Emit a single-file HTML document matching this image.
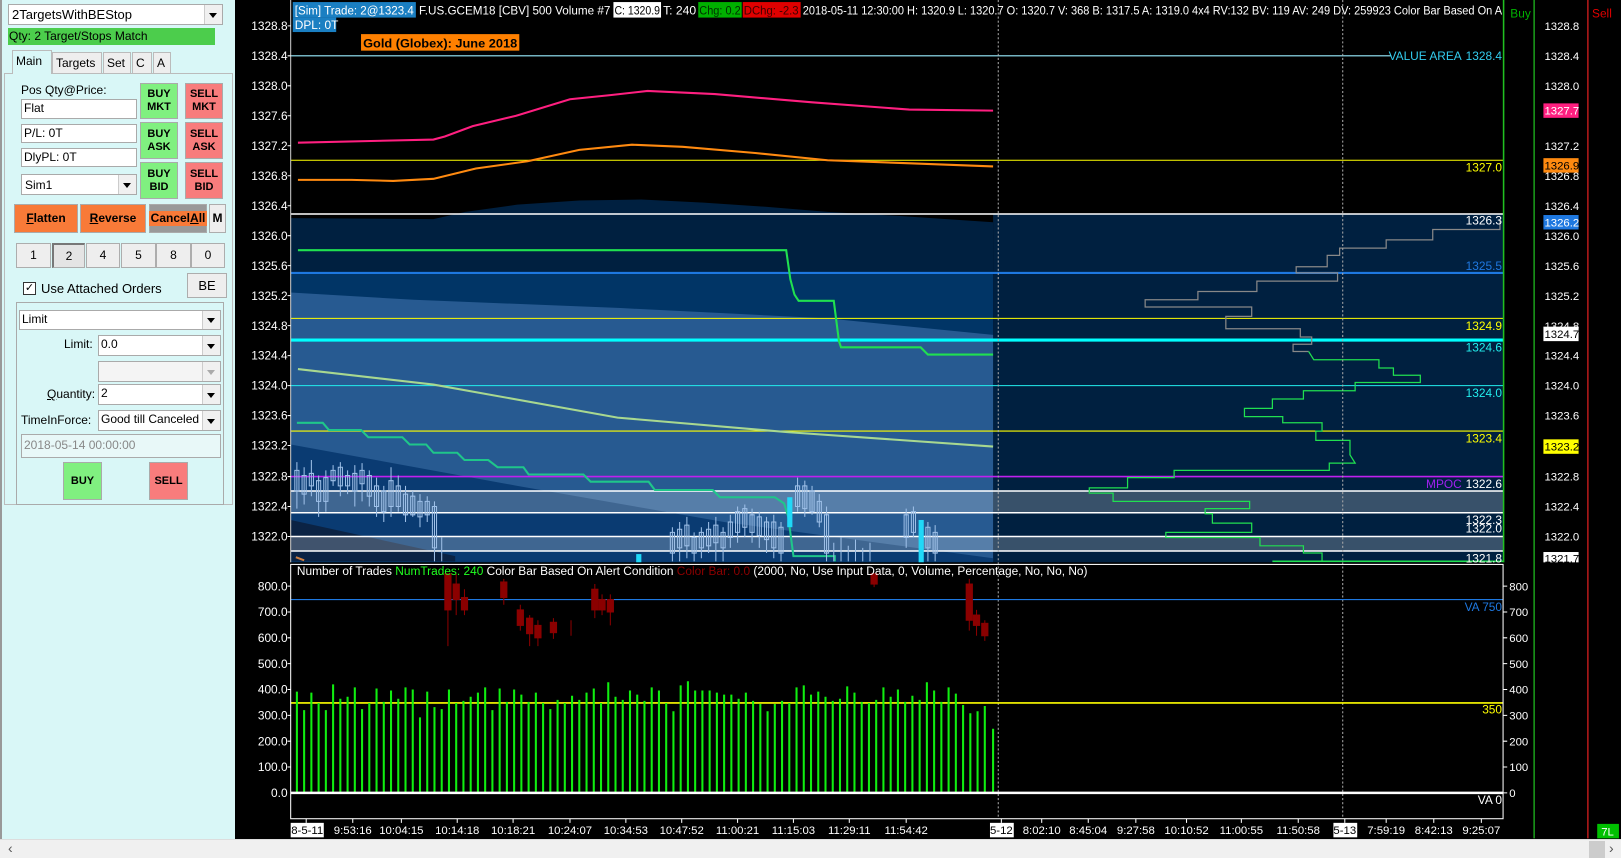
<!DOCTYPE html>
<html><head><meta charset="utf-8"><style>
*{margin:0;padding:0;box-sizing:border-box}
body{width:1621px;height:858px;overflow:hidden;background:#000;font-family:"Liberation Sans",sans-serif;position:relative}
#chart{position:absolute;left:0;top:0}
#lp{position:absolute;left:0;top:0;width:235px;height:839px;background:#d9f7f7;border-left:2px solid #999}
.a{position:absolute;font-size:12px;color:#000;white-space:nowrap}
.fld{position:absolute;background:#fff;border:1px solid #aaa;font-size:12px;padding:1px 2px;white-space:nowrap;overflow:hidden}
.dd::after{content:"";position:absolute;right:0;top:0;width:17px;height:100%;background:#f0f0f0;border-left:1px solid #ccc}
.arr{position:absolute;right:5px;top:50%;margin-top:-2px;width:0;height:0;border-left:4px solid transparent;border-right:4px solid transparent;border-top:5px solid #000;z-index:2}
.btn{position:absolute;display:flex;align-items:center;justify-content:center;text-align:center;font-size:11px;font-weight:bold;line-height:13px;border:1px solid #aaa}
.g{background:#80f080}.r{background:#f87c7c}
.o{background:#f87a38;font-size:12px}
.n{background:#eee;font-weight:normal;font-size:12px;border:1px solid #adadad}
.tab{position:absolute;top:52px;height:22px;background:#eee;border:1px solid #bbb;font-size:12px;padding:3px 3px}
#sb{position:absolute;left:0;top:839px;width:1621px;height:19px;background:#f0f0f0;border-top:1px solid #ddd}
</style></head><body>
<svg id="chart" width="1621" height="858" viewBox="0 0 1567 830" preserveAspectRatio="none" font-family="Liberation Sans, sans-serif">
<defs><clipPath id="pp"><rect x="281" y="0" width="1172" height="544"/></clipPath></defs>
<rect x="0" y="0" width="1567" height="830" fill="#000"/>
<g clip-path="url(#pp)">
<polygon fill="#002040" points="281,211 419,212 450,205 500,198 560,194 620,193 680,196 740,200 800,205 870,209 960,215 960,543 281,543"/>
<rect x="960" y="207" width="493" height="337" fill="#002040"/>
<rect x="281" y="265" width="679" height="279" fill="#013566"/>
<polygon fill="#275a91" points="281,283 400,290 600,298 800,308 960,324 960,543 281,543"/>
<polygon fill="#0a3b72" points="281,430 500,470 700,505 960,540 960,543 281,543"/>
<polygon fill="#0b2344" points="281,503 440,538 440,543 281,543"/>
<rect x="281" y="475" width="1172" height="21" fill="#fff" fill-opacity="0.22"/>
<rect x="281" y="519" width="1172" height="14" fill="#fff" fill-opacity="0.22"/>
<g stroke="#fff" stroke-width="1.5"><line x1="281" y1="207" x2="1453" y2="207"/><line x1="281" y1="475" x2="1453" y2="475"/><line x1="281" y1="496" x2="1453" y2="496"/><line x1="281" y1="519" x2="1453" y2="519"/><line x1="281" y1="533" x2="1453" y2="533"/></g>
<line x1="281" y1="54" x2="1345" y2="54" stroke="#9ef" stroke-width="1"/>
<line x1="281" y1="155" x2="1453" y2="155" stroke="#ff0" stroke-width="1"/>
<line x1="281" y1="264" x2="1453" y2="264" stroke="#1e78e0" stroke-width="2"/>
<line x1="281" y1="308" x2="1453" y2="308" stroke="#ff0" stroke-width="1"/>
<line x1="281" y1="329" x2="1453" y2="329" stroke="#0ff" stroke-width="3"/>
<line x1="281" y1="373" x2="1453" y2="373" stroke="#2ee" stroke-width="1"/>
<line x1="281" y1="417" x2="1453" y2="417" stroke="#ff0" stroke-width="1"/>
<line x1="281" y1="461" x2="1453" y2="461" stroke="#c020f0" stroke-width="1.5"/>
<polyline fill="none" stroke="#ff1f80" stroke-width="2" points="288,138 419,135 430,132 457,122 499,112 551,96 590,92 626,88 691,91 785,99 879,106 960,107"/>
<polyline fill="none" stroke="#ff8a10" stroke-width="2" points="288,174 340,174 380,175 419,173 460,163 510,156 560,145 611,140 660,142 730,148 800,155 880,158 960,161"/>
<polyline fill="none" stroke="#20e050" stroke-width="2" points="288,242 760,242 764,270 768,285 772,291 806,291 811,330 813,336 890,336 897,343 960,343"/>
<polyline fill="none" stroke="#a8d890" stroke-width="2" points="288,357 419,372 597,404 761,418 960,432"/>
<polyline fill="none" stroke="#1fc68a" stroke-width="2" points="287,409 312,409 318,416 349,416 356,423 389,423 396,430 412,430 419,438 442,438 449,445 472,445 481,452 506,452 511,459 564,459 571,466 627,466 633,474 689,474 696,481 749,481 758,487 762,500 767,538 807,538 807,543"/>
<g stroke="#9ec0e8" fill="none" stroke-width="1">
<path d="M287,447V492M294,452V488M301,445V480M308,460V500M315,455V495M322,450V470M329,447V480M336,455V478M343,450V490M350,448V485M357,455V490M364,462V500M371,470V505M378,452V500M385,460V495M392,470V505M399,475V500M406,478V510M413,480V505M420,485V543M427,520V543M650,510V543M657,505V543M664,500V540M671,515V543M678,510V540M685,505V535M692,500V543M699,510V543M706,498V530M713,490V525M720,488V520M727,492V525M734,495V530M741,500V535M748,498V540M755,505V543M771,462V495M778,465V500M785,470V498M792,478V510M799,490V543M806,525V543M813,520V543M820,528V543M827,522V543M834,530V543M841,525V543M876,492V530M883,490V520M897,505V543M904,508V543"/>
<path d="M285,455h4v20h-4zM292,460h4v18h-4zM299,458h4v12h-4zM306,465h4v20h-4zM313,462h4v23h-4zM320,455h4v10h-4zM327,452h4v18h-4zM334,460h4v10h-4zM341,458h4v17h-4zM348,455h4v13h-4zM355,460h4v20h-4zM362,470h4v20h-4zM369,475h4v20h-4zM376,465h4v25h-4zM383,470h4v20h-4zM390,478h4v20h-4zM397,480h4v18h-4zM404,485h4v15h-4zM411,485h4v13h-4zM418,490h4v40h-4zM648,515h4v20h-4zM655,512h4v18h-4zM662,508h4v20h-4zM669,520h4v15h-4zM676,515h4v15h-4zM683,512h4v16h-4zM690,508h4v17h-4zM697,515h4v15h-4zM704,505h4v15h-4zM711,495h4v20h-4zM718,492h4v18h-4zM725,498h4v17h-4zM732,500h4v18h-4zM739,505h4v17h-4zM746,505h4v25h-4zM753,510h4v25h-4zM769,470h4v20h-4zM776,470h4v22h-4zM783,475h4v20h-4zM790,485h4v20h-4zM797,498h4v37h-4zM874,498h4v22h-4zM881,495h4v20h-4zM895,510h4v20h-4zM902,515h4v20h-4z"/>
</g>
<g fill="#20d8f8"><rect x="761" y="481" width="5" height="29"/><rect x="888" y="503" width="5" height="41"/><rect x="615" y="536" width="5" height="8"/></g>
<polyline fill="none" stroke="#888" stroke-width="1.2" points="1450,213 1450,222 1385,222 1385,232 1340,232 1340,240 1295,240 1295,247 1283,247 1283,258 1253,258 1253,264 1293,264 1293,272 1215,272 1215,282 1158,282 1158,290 1107,290 1107,297 1210,297 1210,306 1185,306 1185,318 1257,318 1257,326 1268,326 1268,333 1250,333 1250,340 1265,340"/>
<polyline fill="none" stroke="#20e050" stroke-width="1.2" points="1265,340 1270,348 1333,348 1333,356 1347,356 1347,363 1373,363 1373,370 1310,370 1310,378 1260,378 1260,386 1230,386 1230,395 1203,395 1203,403 1240,403 1240,409 1278,409 1278,417 1272,417 1272,426 1305,426 1305,440 1310,448 1285,448 1285,455 1135,455 1135,462 1090,462 1090,472 1053,472 1053,477 1076,477 1076,485 1208,485 1208,492 1165,492 1165,497 1172,497 1172,506 1210,506 1210,515 1127,515 1127,520 1218,520 1218,528 1260,528 1260,535 1278,535 1278,543"/>
<line x1="1230" y1="543" x2="1453" y2="543" stroke="#20e050" stroke-width="1.5"/>
<path d="M286,539l8,3" stroke="#d08040" stroke-width="2"/>
</g>
<g stroke="#aaa" stroke-dasharray="2,2" stroke-width="1"><line x1="965" y1="0" x2="965" y2="792"/><line x1="1298" y1="0" x2="1298" y2="792"/></g>
<line x1="281" y1="0" x2="281" y2="544" stroke="#ccc" stroke-width="1"/>
<line x1="1453.5" y1="0" x2="1453.5" y2="544" stroke="#20c020" stroke-width="1.5"/>
<line x1="1483" y1="0" x2="1483" y2="811" stroke="#20c020" stroke-width="1.2"/>
<line x1="1535" y1="0" x2="1535" y2="811" stroke="#e02020" stroke-width="1.2"/>
<g font-size="11.5" fill="#fff" lengthAdjust="spacingAndGlyphs">
<rect x="283" y="2" width="119" height="15" fill="#1a7fc2"/>
<text x="285" y="14" textLength="115" lengthAdjust="spacingAndGlyphs">[Sim]  Trade: 2@1323.4</text>
<text x="405" y="14" textLength="185" lengthAdjust="spacingAndGlyphs">F.US.GCEM18 [CBV]  500 Volume  #7</text>
<rect x="593" y="2" width="46" height="15" fill="#fff"/><text x="594" y="14" fill="#000" textLength="44" lengthAdjust="spacingAndGlyphs">C: 1320.9</text>
<text x="641" y="14" textLength="32" lengthAdjust="spacingAndGlyphs">T: 240</text>
<rect x="675" y="2" width="42" height="15" fill="#00b000"/><text x="676" y="14" fill="#003000" textLength="40" lengthAdjust="spacingAndGlyphs">Chg: 0.2</text>
<rect x="718" y="2" width="56" height="15" fill="#e00000"/><text x="719" y="14" fill="#400000" textLength="53" lengthAdjust="spacingAndGlyphs">DChg: -2.3</text>
<text x="776" y="14" textLength="676" lengthAdjust="spacingAndGlyphs">2018-05-11 12:30:00 H: 1320.9 L: 1320.7 O: 1320.7 V: 368 B: 1317.5 A: 1319.0 4x4 RV:132 BV: 119 AV: 249 DV: 259923 Color Bar Based On A</text>
<rect x="283" y="17" width="42" height="14" fill="#1a7fc2"/><text x="285" y="28">DPL: 0T</text>
<rect x="349" y="33" width="153" height="16" fill="#ff8000"/><text x="351" y="46" fill="#000" font-weight="bold" font-size="12" textLength="149" lengthAdjust="spacingAndGlyphs">Gold (Globex): June 2018</text>
<text x="1460" y="17" fill="#00b000">Buy</text><text x="1539" y="17" fill="#e00000">Sell</text>
</g>
<g font-size="11.5" fill="#fff" text-anchor="end">
<text x="278" y="29">1328.8</text><text x="278" y="58">1328.4</text><text x="278" y="87">1328.0</text><text x="278" y="116">1327.6</text><text x="278" y="145">1327.2</text><text x="278" y="174">1326.8</text><text x="278" y="203">1326.4</text><text x="278" y="232">1326.0</text><text x="278" y="261">1325.6</text><text x="278" y="290">1325.2</text><text x="278" y="319">1324.8</text><text x="278" y="348">1324.4</text><text x="278" y="377">1324.0</text><text x="278" y="406">1323.6</text><text x="278" y="435">1323.2</text><text x="278" y="465">1322.8</text><text x="278" y="494">1322.4</text><text x="278" y="523">1322.0</text>
<text x="278" y="571">800.0</text><text x="278" y="596">700.0</text><text x="278" y="621">600.0</text><text x="278" y="646">500.0</text><text x="278" y="671">400.0</text><text x="278" y="696">300.0</text><text x="278" y="721">200.0</text><text x="278" y="746">100.0</text><text x="278" y="771">0.0</text>
<text x="1413" y="58" fill="#3ce">VALUE AREA</text><text x="1452" y="58" fill="#3ce">1328.4</text>
<text x="1452" y="166" fill="#ff0">1327.0</text>
<text x="1452" y="217">1326.3</text>
<text x="1452" y="261" fill="#1e78e0">1325.5</text>
<text x="1452" y="319" fill="#ff0">1324.9</text>
<text x="1452" y="340" fill="#2ee">1324.6</text>
<text x="1452" y="384" fill="#2ee">1324.0</text>
<text x="1452" y="428" fill="#ff0">1323.4</text>
<text x="1413" y="472" fill="#a020f0">MPOC</text><text x="1452" y="472">1322.6</text>
<text x="1452" y="507">1322.3</text><text x="1452" y="515">1322.0</text><text x="1452" y="544">1321.8</text>
<text x="1452" y="591" fill="#1e78e0">VA  750</text>
<text x="1452" y="690" fill="#ff0">350</text>
<text x="1452" y="778">VA  0</text>
</g>
<g stroke="#fff" stroke-width="1"><path d="M278,25h3M278,54h3M278,83h3M278,112h3M278,141h3M278,170h3M278,199h3M278,228h3M278,257h3M278,286h3M278,315h3M278,344h3M278,373h3M278,402h3M278,431h3M278,461h3M278,490h3M278,519h3M278,567h3M278,592h3M278,617h3M278,642h3M278,667h3M278,692h3M278,717h3M278,742h3M1453,567h4M1453,592h4M1453,617h4M1453,642h4M1453,667h4M1453,692h4M1453,717h4M1453,742h4M1453,767h4"/></g>
<g font-size="11" fill="#fff">
<text x="1493" y="29">1328.8</text><text x="1493" y="58">1328.4</text><text x="1493" y="87">1328.0</text>
<rect x="1492" y="100" width="34" height="14" fill="#ff1f80"/><text x="1493" y="111">1327.7</text>
<text x="1493" y="145">1327.2</text>
<rect x="1492" y="153" width="34" height="14" fill="#ff8a10"/><text x="1493" y="164" fill="#000">1326.9</text>
<text x="1493" y="174">1326.8</text><text x="1493" y="203">1326.4</text>
<rect x="1492" y="208" width="34" height="14" fill="#1e78e0"/><text x="1493" y="219">1326.2</text>
<text x="1493" y="232">1326.0</text><text x="1493" y="261">1325.6</text><text x="1493" y="290">1325.2</text><text x="1493" y="319">1324.8</text>
<rect x="1492" y="316" width="34" height="14" fill="#fff"/><text x="1493" y="327" fill="#000">1324.7</text>
<text x="1493" y="348">1324.4</text><text x="1493" y="377">1324.0</text><text x="1493" y="406">1323.6</text>
<rect x="1492" y="425" width="34" height="14" fill="#ff0"/><text x="1493" y="436" fill="#000">1323.2</text>
<text x="1493" y="465">1322.8</text><text x="1493" y="494">1322.4</text><text x="1493" y="523">1322.0</text>
<rect x="1492" y="534" width="34" height="10" fill="#fff"/><text x="1493" y="544" fill="#000">1321.7</text>
<text x="1459" y="571">800</text><text x="1459" y="596">700</text><text x="1459" y="621">600</text><text x="1459" y="646">500</text><text x="1459" y="671">400</text><text x="1459" y="696">300</text><text x="1459" y="721">200</text><text x="1459" y="746">100</text><text x="1459" y="771">0</text>
</g>
<line x1="281" y1="546" x2="1453" y2="546" stroke="#444"/>
<line x1="281" y1="580" x2="1453" y2="580" stroke="#1e78e0" stroke-width="1.2"/>
<line x1="281" y1="680" x2="1453" y2="680" stroke="#ff0" stroke-width="1.5"/>
<g stroke="#8b0000" fill="#8b0000">
<path d="M433,555V625M441,555V595M449,570V595M487,560V585M503,585V610M512,595V625M520,600V625M535,598V618M552,600V615M575,565V598M582,575V595M590,575V605M845,555V568M937,560V610M944,590V615M952,600V620" stroke-width="1"/>
<rect x="430" y="555" width="6" height="35"/><rect x="438" y="565" width="6" height="15"/><rect x="446" y="578" width="6" height="12"/><rect x="484" y="563" width="6" height="15"/><rect x="500" y="590" width="6" height="15"/><rect x="509" y="598" width="6" height="15"/><rect x="517" y="605" width="6" height="12"/><rect x="532" y="602" width="6" height="10"/><rect x="572" y="570" width="6" height="20"/><rect x="579" y="580" width="6" height="10"/><rect x="587" y="580" width="6" height="12"/><rect x="842" y="555" width="6" height="10"/><rect x="934" y="565" width="6" height="35"/><rect x="941" y="595" width="6" height="10"/><rect x="949" y="603" width="6" height="12"/>
</g>
<path stroke="#10ee10" stroke-width="2" fill="none" d="M287,767V669M294,767V687M301,767V670M308,767V680M315,767V687M322,767V662M329,767V676M336,767V674M343,767V665M350,767V686M357,767V680M364,767V666M371,767V679M378,767V668M385,767V676M392,767V665M399,767V667M406,767V694M413,767V669M420,767V684M427,767V686M434,767V667M441,767V680M448,767V678M455,767V674M462,767V670M469,767V665M476,767V687M483,767V666M490,767V679M497,767V667M504,767V672M511,767V679M518,767V670M525,767V680M532,767V686M539,767V677M546,767V680M553,767V673M560,767V677M567,767V670M574,767V666M581,767V680M588,767V660M595,767V674M602,767V677M609,767V668M616,767V672M623,767V678M630,767V665M637,767V668M644,767V680M651,767V688M658,767V663M665,767V659M672,767V668M679,767V668M686,767V668M693,767V670M700,767V672M707,767V672M714,767V676M721,767V670M728,767V678M735,767V681M742,767V688M749,767V681M756,767V678M763,767V680M770,767V665M777,767V663M784,767V672M791,767V669M798,767V674M805,767V678M812,767V676M819,767V664M826,767V670M833,767V679M840,767V680M847,767V677M854,767V665M861,767V674M868,767V667M875,767V679M882,767V673M889,767V677M896,767V660M903,767V668M910,767V679M917,767V665M924,767V671M931,767V682M938,767V690M945,767V688M952,767V683M960,767V705"/>
<text x="287" y="556" font-size="11.5" fill="#fff">Number of Trades <tspan fill="#20ff20">NumTrades: 240</tspan>  Color Bar Based On Alert Condition <tspan fill="#8b0000">Color Bar: 0.0</tspan>  (2000, No, Use Input Data, 0, Volume, Percentage, No, No, No)</text>
<rect x="281" y="546" width="1172" height="246" fill="none" stroke="#fff" stroke-width="1"/>
<line x1="281" y1="767" x2="1453" y2="767" stroke="#fff" stroke-width="2.5"/>
<g stroke="#fff"><path d="M296,792v4M341,792v4M388,792v4M442,792v4M496,792v4M551,792v4M605,792v4M659,792v4M713,792v4M767,792v4M821,792v4M876,792v4M968,792v4M1007,792v4M1052,792v4M1098,792v4M1147,792v4M1200,792v4M1255,792v4M1300,792v4M1340,792v4M1386,792v4M1432,792v4"/></g>
<g font-size="11" fill="#fff" text-anchor="middle">
<rect x="281" y="796" width="32" height="14" fill="#fff"/><text x="297" y="807" fill="#000">8-5-11</text>
<text x="341" y="807">9:53:16</text><text x="388" y="807">10:04:15</text><text x="442" y="807">10:14:18</text><text x="496" y="807">10:18:21</text><text x="551" y="807">10:24:07</text><text x="605" y="807">10:34:53</text><text x="659" y="807">10:47:52</text><text x="713" y="807">11:00:21</text><text x="767" y="807">11:15:03</text><text x="821" y="807">11:29:11</text><text x="876" y="807">11:54:42</text>
<rect x="957" y="796" width="23" height="14" fill="#fff"/><text x="968" y="807" fill="#000">5-12</text>
<text x="1007" y="807">8:02:10</text><text x="1052" y="807">8:45:04</text><text x="1098" y="807">9:27:58</text><text x="1147" y="807">10:10:52</text><text x="1200" y="807">11:00:55</text><text x="1255" y="807">11:50:58</text>
<rect x="1289" y="796" width="23" height="14" fill="#fff"/><text x="1300" y="807" fill="#000">5-13</text>
<text x="1340" y="807">7:59:19</text><text x="1386" y="807">8:42:13</text><text x="1432" y="807">9:25:07</text>
<rect x="1544" y="797" width="21" height="14" fill="#00c000"/><text x="1554" y="808">7L</text>
</g>
</svg>

<div id="lp">
<div class="fld dd" style="left:6px;top:4px;width:215px;height:21px;font-size:13px;padding:2px 3px">2TargetsWithBEStop<span class="arr"></span></div>
<div class="a" style="left:6px;top:28px;width:207px;height:17px;background:#4ccd4c;padding:1px 1px">Qty: 2 Target/Stops Match</div>
<div style="position:absolute;left:2px;top:73px;width:229px;height:432px;border:1px solid #bbb;background:#d9f7f7"></div>
<div class="tab" style="left:10px;top:50px;width:40px;height:24px;background:#d9f7f7;border-bottom:none">Main</div>
<div class="tab" style="left:50px;width:50px">Targets</div>
<div class="tab" style="left:101px;width:28px">Set</div>
<div class="tab" style="left:130px;width:20px">C</div>
<div class="tab" style="left:151px;width:18px">A</div>
<div class="a" style="left:19px;top:83px">Pos Qty@Price:</div>
<div class="fld" style="left:19px;top:99px;width:116px;height:20px">Flat</div>
<div class="fld" style="left:19px;top:124px;width:116px;height:19px">P/L: 0T</div>
<div class="fld" style="left:19px;top:148px;width:116px;height:19px">DlyPL: 0T</div>
<div class="fld dd" style="left:19px;top:174px;width:116px;height:21px;padding:3px 3px">Sim1<span class="arr"></span></div>
<div class="btn g" style="left:138px;top:83px;width:38px;height:36px">BUY<br>MKT</div>
<div class="btn r" style="left:183px;top:83px;width:38px;height:36px">SELL<br>MKT</div>
<div class="btn g" style="left:138px;top:122px;width:38px;height:37px">BUY<br>ASK</div>
<div class="btn r" style="left:183px;top:122px;width:38px;height:37px">SELL<br>ASK</div>
<div class="btn g" style="left:138px;top:162px;width:38px;height:37px">BUY<br>BID</div>
<div class="btn r" style="left:183px;top:162px;width:38px;height:37px">SELL<br>BID</div>
<div class="btn o" style="left:12px;top:204px;width:64px;height:29px"><u>F</u>latten</div>
<div class="btn o" style="left:78px;top:204px;width:66px;height:29px"><u>R</u>everse</div>
<div class="btn" style="left:147px;top:204px;width:58px;height:29px;background:#999;font-size:12px"><span style="background:#f87a38;padding:1px 2px">Cancel<u>A</u>ll</span></div>
<div class="btn n" style="left:207px;top:204px;width:17px;height:29px;font-weight:bold">M</div>
<div class="btn n" style="left:14px;top:243px;width:35px;height:25px">1</div>
<div class="btn n" style="left:50px;top:243px;width:33px;height:25px;background:#e4e4e4;border-top:2px solid #777;border-left:2px solid #777">2</div>
<div class="btn n" style="left:84px;top:243px;width:34px;height:25px">4</div>
<div class="btn n" style="left:119px;top:243px;width:35px;height:25px">5</div>
<div class="btn n" style="left:154px;top:243px;width:35px;height:25px">8</div>
<div class="btn n" style="left:189px;top:243px;width:34px;height:25px">0</div>
<div style="position:absolute;left:21px;top:282px;width:13px;height:13px;background:#fff;border:1px solid #333;font-size:11px;line-height:11px;text-align:center">✓</div>
<div class="a" style="left:39px;top:281px;font-size:13px">Use Attached Orders</div>
<div class="btn n" style="left:185px;top:273px;width:40px;height:25px;font-size:13px">BE</div>
<div style="position:absolute;left:14px;top:302px;width:208px;height:203px;border:1px solid #aaa"></div>
<div class="fld dd" style="left:17px;top:310px;width:202px;height:20px">Limit<span class="arr"></span></div>
<div class="a" style="left:62px;top:337px">Limit:</div>
<div class="fld dd" style="left:96px;top:335px;width:123px;height:21px">0.0<span class="arr"></span></div>
<div class="fld dd" style="left:96px;top:361px;width:123px;height:21px;background:#f4f4f4"><span class="arr" style="border-top-color:#aaa"></span></div>
<div class="a" style="left:45px;top:387px"><u>Q</u>uantity:</div>
<div class="fld dd" style="left:96px;top:384px;width:123px;height:21px">2<span class="arr"></span></div>
<div class="a" style="left:19px;top:413px">TimeInForce:</div>
<div class="fld dd" style="left:96px;top:410px;width:123px;height:21px">Good till Canceled<span class="arr"></span></div>
<div class="fld" style="left:19px;top:434px;width:200px;height:24px;background:#e8f8f8;color:#888;padding:3px 2px">2018-05-14  00:00:00</div>
<div class="btn g" style="left:61px;top:462px;width:39px;height:38px">BUY</div>
<div class="btn r" style="left:147px;top:462px;width:39px;height:38px">SELL</div>
</div>
<div id="sb"><span style="position:absolute;left:8px;top:0;font-size:14px;color:#555">&#8249;</span><div style="position:absolute;left:1589px;top:1px;width:16px;height:17px;background:#ccc"></div><span style="position:absolute;left:1609px;top:0;font-size:14px;color:#555">&#8250;</span></div>
</body></html>
